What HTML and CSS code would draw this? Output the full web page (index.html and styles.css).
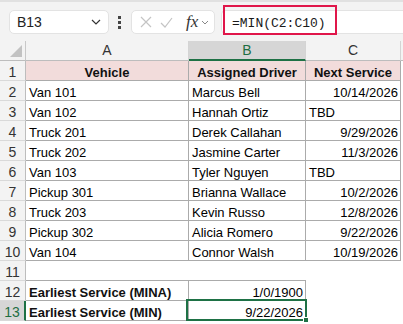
FILE: index.html
```html
<!DOCTYPE html>
<html lang="en">
<head>
  <meta charset="UTF-8">
  <meta name="viewport" content="width=device-width, initial-scale=1.0">
  <title> Fleet Service </title>
  <link rel="stylesheet" href="styles.css">
</head>
<body>
  <div class="toolbar">
    <div class="namebox">
      <span>B13</span>
      <svg width="10" height="6" viewBox="0 0 10 6"><polyline points="1,1 5,5 9,1" fill="none" stroke="#333" stroke-width="1.2"/></svg>
    </div>
    <div class="dots"><i></i><i></i><i></i></div>
    <div class="fxbox">
      <svg width="12" height="12" viewBox="0 0 12 12"><path d="M1 1 L11 11 M11 1 L1 11" stroke="#c4c4c4" stroke-width="1.2"/></svg>
      <svg width="13" height="11" viewBox="0 0 13 11"><polyline points="1,6 5,10 12,1" fill="none" stroke="#c4c4c4" stroke-width="1.2"/></svg>
      <span class="fx">fx</span>
      <svg width="8" height="5" viewBox="0 0 8 5"><polyline points="1,1 4,4 7,1" fill="none" stroke="#888" stroke-width="1"/></svg>
    </div>
    <div class="formula">
      <span class="formula-text">=MIN(C2:C10)</span>
      <div class="mark"></div>
    </div>
  </div>

  <div class="sheet">
    <div class="row">
      <div class="corner"><i></i></div>
      <div class="ch">A</div>
      <div class="ch active">B</div>
      <div class="ch">C</div>
      <div class="ch end"></div>
    </div>
    <div class="row">
      <div class="rh">1</div>
      <div class="c b head">Vehicle</div>
      <div class="c b head">Assigned Driver</div>
      <div class="c b head">Next Service</div>
      <div class="c"></div>
    </div>
    <div class="row">
      <div class="rh">2</div>
      <div class="c b">Van 101</div>
      <div class="c b">Marcus Bell</div>
      <div class="c b num">10/14/2026</div>
      <div class="c"></div>
    </div>
    <div class="row">
      <div class="rh">3</div>
      <div class="c b">Van 102</div>
      <div class="c b">Hannah Ortiz</div>
      <div class="c b">TBD</div>
      <div class="c"></div>
    </div>
    <div class="row">
      <div class="rh">4</div>
      <div class="c b">Truck 201</div>
      <div class="c b">Derek Callahan</div>
      <div class="c b num">9/29/2026</div>
      <div class="c"></div>
    </div>
    <div class="row">
      <div class="rh">5</div>
      <div class="c b">Truck 202</div>
      <div class="c b">Jasmine Carter</div>
      <div class="c b num">11/3/2026</div>
      <div class="c"></div>
    </div>
    <div class="row">
      <div class="rh">6</div>
      <div class="c b">Van 103</div>
      <div class="c b">Tyler Nguyen</div>
      <div class="c b">TBD</div>
      <div class="c"></div>
    </div>
    <div class="row">
      <div class="rh">7</div>
      <div class="c b">Pickup 301</div>
      <div class="c b">Brianna Wallace</div>
      <div class="c b num">10/2/2026</div>
      <div class="c"></div>
    </div>
    <div class="row">
      <div class="rh">8</div>
      <div class="c b">Truck 203</div>
      <div class="c b">Kevin Russo</div>
      <div class="c b num">12/8/2026</div>
      <div class="c"></div>
    </div>
    <div class="row">
      <div class="rh">9</div>
      <div class="c b">Pickup 302</div>
      <div class="c b">Alicia Romero</div>
      <div class="c b num">9/22/2026</div>
      <div class="c"></div>
    </div>
    <div class="row">
      <div class="rh">10</div>
      <div class="c b">Van 104</div>
      <div class="c b">Connor Walsh</div>
      <div class="c b num">10/19/2026</div>
      <div class="c"></div>
    </div>
    <div class="row">
      <div class="rh">11</div>
      <div class="c bb"></div>
      <div class="c bb"></div>
      <div class="c"></div>
      <div class="c"></div>
    </div>
    <div class="row">
      <div class="rh">12</div>
      <div class="c b strong">Earliest Service (MINA)</div>
      <div class="c b num">1/0/1900</div>
      <div class="c"></div>
      <div class="c"></div>
    </div>
    <div class="row">
      <div class="rh active">13</div>
      <div class="c b strong">Earliest Service (MIN)</div>
      <div class="c b num selected">9/22/2026<span class="handle"></span></div>
      <div class="c"></div>
      <div class="c"></div>
    </div>
  </div>
</body>
</html>
```

FILE: styles.css
```css
* {
  margin: 0;
  padding: 0;
  box-sizing: border-box;
}

body {
  width: 403px;
  height: 324px;
  overflow: hidden;
  background-color: #fff;
  font-family: "Liberation Sans", Arial, sans-serif;
  font-size: 13px;
  color: #000;
}

/* formula bar */
.toolbar {
  display: flex;
  align-items: center;
  height: 41px;
  padding: 7px 0 6px 9px;
  background-color: #f3f3f3;
  border-top: 2px solid #e1e1e1;
}

.namebox {
  display: flex;
  align-items: center;
  justify-content: space-between;
  width: 100px;
  height: 24px;
  padding: 0 7px 0 7px;
  background-color: #fff;
  border: 1px solid #e3e3e3;
  border-radius: 5px;
  font-size: 14px;
  color: #222;
}

.dots {
  display: flex;
  flex-direction: column;
  gap: 2px;
  margin: 0 10px 0 9px;
}

.dots>i {
  display: block;
  width: 3px;
  height: 3px;
  background-color: #444;
}

.fxbox {
  display: flex;
  align-items: center;
  width: 84px;
  height: 24px;
  padding-left: 8px;
  background-color: #fff;
  border: 1px solid #e3e3e3;
  border-radius: 5px;
}

.fxbox>svg:first-child {
  margin-right: 8px;
}

.fxbox>svg:nth-child(2) {
  margin-right: 13px;
}

.fx {
  font-family: "Liberation Serif", "Times New Roman", serif;
  font-style: italic;
  font-size: 17px;
  color: #333;
  margin-right: 3px;
}

.formula {
  position: relative;
  flex: 1;
  height: 24px;
  margin-left: 6px;
  padding-left: 10px;
  line-height: 23px;
  background-color: #fff;
  border: 1px solid #e3e3e3;
  border-right: none;
  border-radius: 5px 0 0 5px;
}

.formula-text {
  font-family: "Liberation Mono", "DejaVu Sans Mono", monospace;
  font-size: 13px;
  color: #1a1a1a;
}

.mark {
  position: absolute;
  left: 1px;
  top: -6px;
  width: 114px;
  height: 30px;
  border: 2px solid #e0164a;
}

/* grid */
.sheet {
  display: grid;
  grid-template-columns: 26px 163px 117px 95px 1fr;
  grid-template-rows: 20px repeat(13, 20px);
}

.row {
  display: contents;
}

.corner {
  position: relative;
  background-color: #f3f3f3;
  border-right: 1px solid #c8c8c8;
  border-bottom: 1px solid #bdbdbd;
}

.corner>i {
  position: absolute;
  right: 3px;
  bottom: 3px;
  width: 12px;
  height: 12px;
  background-color: #c2c2c2;
  clip-path: polygon(100% 0, 100% 100%, 0 100%);
}

.ch {
  text-align: center;
  line-height: 19px;
  color: #333;
  font-size: 14px;
  background-color: #f3f3f3;
  border-right: 1px solid #d4d4d4;
  border-bottom: 1px solid #bdbdbd;
}

.ch.active {
  color: #1e6e42;
  background-color: #d6d6d6;
  border-bottom: 2px solid #1e7145;
}

.ch.end {
  border-right: none;
}

.rh {
  text-align: center;
  padding-top: 4px;
  line-height: 15px;
  font-size: 14px;
  color: #333;
  background-color: #f3f3f3;
  border-right: 1px solid #bdbdbd;
  border-bottom: 1px solid #d9d9d9;
}

.rh.active {
  color: #1e6e42;
  background-color: #d6d6d6;
  border-right: 2px solid #1e7145;
}

.c {
  padding: 4px 3px 0 3px;
  line-height: 15px;
  white-space: nowrap;
  overflow: visible;
}

.b {
  border-right: 1px solid #ababab;
  border-bottom: 1px solid #ababab;
}

.bb {
  border-bottom: 1px solid #ababab;
}

.head {
  background-color: #f2dcdb;
  font-weight: 700;
  text-align: center;
  color: #111;
}

.strong {
  font-weight: 700;
  color: #111;
}

.num {
  text-align: right;
  padding-right: 2px;
}

.selected {
  position: relative;
}

.selected::after {
  content: "";
  position: absolute;
  left: -3px;
  top: -2px;
  right: -2px;
  bottom: -1px;
  border: 2px solid #1e7145;
}

.handle {
  position: absolute;
  right: -4px;
  bottom: -3px;
  width: 6px;
  height: 6px;
  background-color: #1e7145;
  border: 1px solid #fff;
  z-index: 1;
}
```
